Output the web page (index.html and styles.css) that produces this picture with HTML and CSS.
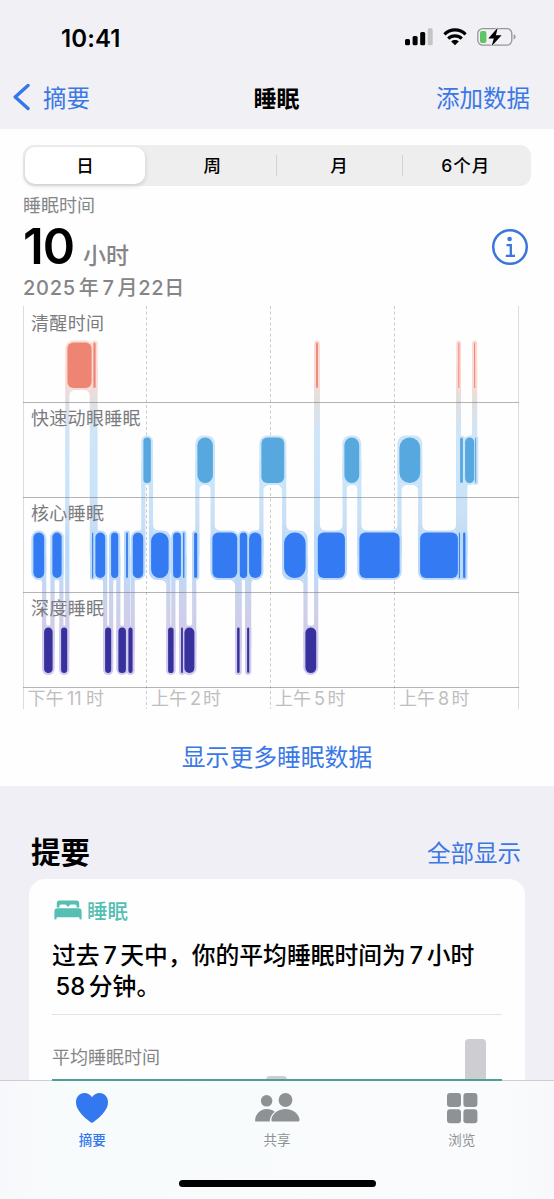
FILE: index.html
```html
<!DOCTYPE html>
<html lang="zh-CN">
<head>
  <meta charset="UTF-8" />
  <meta name="viewport" content="width=device-width, initial-scale=1.0"/>
  <title>睡眠</title>
  <link rel="stylesheet" href="styles.css">
</head>
<body>

  <header>
    <div class="status-bar">
      <span class="clock">10:41</span>
      <div class="status-icons">
        <svg width="28" height="18" viewBox="0 0 28 18">
          <rect x="0" y="11" width="5" height="6.3" rx="1.5"/>
          <rect x="7.6" y="8" width="5" height="9.3" rx="1.5"/>
          <rect x="15.2" y="4" width="5" height="13.3" rx="1.5"/>
          <rect x="22.7" y="0.3" width="5" height="17" rx="1.5" fill="#c4c4c8"/>
        </svg>
        <svg width="24" height="18" viewBox="0 0 24 18">
          <g fill="none" stroke="#000" stroke-width="3.1">
            <path d="M1.4 6.4C7.2 0.4 16.8 0.4 22.6 6.4"/>
            <path d="M5.2 10.6C9 6.9 15 6.9 18.8 10.6"/>
          </g>
          <path d="M12 17.2L8.2 13.4C10.3 11.6 13.7 11.6 15.8 13.4Z"/>
        </svg>
        <svg width="40" height="20" viewBox="0 0 40 20">
          <rect x="0.8" y="1.6" width="34" height="16.6" rx="5" fill="none" stroke="#97979b" stroke-width="1.3"/>
          <path d="M36.6 7.3C39.2 8 39.2 11.8 36.6 12.5Z" fill="#97979b"/>
          <rect x="3" y="4" width="6.4" height="12" rx="2" fill="#5fc466"/>
          <path d="M20.8 0.6L11.3 11.4H16.8L14.6 19.2L24.6 8.2H18.9Z" stroke="#f1f0f5" stroke-width="1.6" paint-order="stroke"/>
        </svg>
      </div>
    </div>
    <div class="nav-bar">
      <a class="back" href="#">
        <svg width="18" height="28" viewBox="0 0 18 28"><path d="M15 2.5L2.2 14L15 25.5" fill="none" stroke="#3478e8" stroke-width="3.4" stroke-linecap="round" stroke-linejoin="round"/></svg>
        摘要
      </a>
      <h1>睡眠</h1>
      <a class="add" href="#">添加数据</a>
    </div>
  </header>

  <main>
    <section class="sleep">
      <div class="tabs">
        <button class="active">日</button>
        <button>周</button>
        <button>月</button>
        <button>6个月</button>
      </div>

      <div class="summary">
        <div>
          <p class="label">睡眠时间</p>
          <p class="total"><b>10</b><span>小时</span></p>
          <p class="date">2025<i></i>年<i></i>7<i></i>月22日</p>
        </div>
        <svg class="info" width="38" height="38" viewBox="0 0 38 38" fill="none" stroke="#3a76dc">
          <circle cx="19" cy="19" r="16.8" stroke-width="2.5"/>
          <circle cx="18.6" cy="11" r="2.3" fill="#3a76dc" stroke="none"/>
          <path d="M15.5 17.1H19.8V27.2M14.8 27.8H24" stroke-width="2.3"/>
        </svg>
      </div>

      <svg class="chart" width="554" height="410" viewBox="0 303 554 410">
        <defs>
          <linearGradient id="halo" gradientUnits="userSpaceOnUse" x1="0" y1="340" x2="0" y2="675">
            <stop offset="0" stop-color="#fcdcd5"/>
            <stop offset="0.13" stop-color="#fadad5"/>
            <stop offset="0.18" stop-color="#e2dee0"/>
            <stop offset="0.27" stop-color="#cfe5f7"/>
            <stop offset="0.44" stop-color="#c9e4fa"/>
            <stop offset="0.54" stop-color="#cadff4"/>
            <stop offset="0.6" stop-color="#b9dafb"/>
            <stop offset="0.7" stop-color="#bcdafa"/>
            <stop offset="0.76" stop-color="#cbd3ec"/>
            <stop offset="0.86" stop-color="#d0cce9"/>
            <stop offset="1" stop-color="#cfcaf0"/>
          </linearGradient>
        </defs>
        <g class="dashes">
          <path d="M146.5 306V709M270.5 306V709M394.5 306V709"/>
        </g>
        <g id="links" fill="url(#halo)"></g>
        <g id="bars"></g>
        <path class="side" d="M23.5 306V709M518.5 306V709"/>
        <path class="rows" d="M23 402.5H519M23 497.5H519M23 592.5H519M23 687.5H519"/>
        <g class="stage-names">
          <text x="31" y="330" textLength="73">清醒时间</text>
          <text x="31" y="425" textLength="109.5">快速动眼睡眠</text>
          <text x="31" y="520" textLength="73">核心睡眠</text>
          <text x="31" y="614.5" textLength="73">深度睡眠</text>
        </g>
        <g class="hours">
          <text x="27.5" y="705">下午</text><text x="67" y="705">11</text><text x="86" y="705">时</text>
          <text x="151" y="705">上午</text><text x="190" y="705">2</text><text x="203" y="705">时</text>
          <text x="275" y="705">上午</text><text x="314" y="705">5</text><text x="327.5" y="705">时</text>
          <text x="399" y="705">上午</text><text x="438" y="705">8</text><text x="451.5" y="705">时</text>
        </g>
      </svg>

      <a class="more" href="#">显示更多睡眠数据</a>
    </section>

    <section class="highlights">
      <div class="heading">
        <h2>提要</h2>
        <a href="#">全部显示</a>
      </div>
      <article class="card">
        <div class="card-title">
          <svg width="28" height="20" viewBox="0 0 28 20" fill="#55bfb3">
            <path d="M2.8 7.4V3.2Q2.8 0.4 5.6 0.4H22.4Q25.2 0.4 25.2 3.2V7.4H22.6V6Q22.6 4.4 21 4.4H16.8Q15.2 4.4 15.2 6Q14 7 12.8 6Q12.8 4.4 11.200 4.4H7Q5.400 4.4 5.400 6V7.400Z"/>
            <path d="M3.500 8.300H24.500Q27.600 8.300 27.600 11.500V18.500Q27.600 19.400 26.500 19.400Q25.400 19.400 25.400 18.500V17.200H2.600V18.500Q2.600 19.400 1.500 19.400Q0.400 19.400 0.400 18.500V11.500Q0.400 8.300 3.500 8.300Z"/>
          </svg>
          睡眠
        </div>
        <p class="text">过去<i></i>7<i></i>天中，你的平均睡眠时间为<i></i>7<i></i>小时<br><i></i>58<i></i>分钟。</p>
        <p class="average">平均睡眠时间</p>
        <div class="week">
          <span class="day mid"></span>
          <span class="day last"></span>
        </div>
      </article>
    </section>
  </main>

  <footer>
    <nav>
      <a class="current" href="#">
        <svg width="34" height="32" viewBox="0 0 34 32"><path fill="#3478f0" d="M17 31C14 29 1 20 1 10.2C1 5 4.6 1 9.3 1C12.7 1 15.5 2.8 17 5.2C18.5 2.8 21.3 1 24.7 1C29.4 1 33 5 33 10.2C33 20 20 29 17 31Z"/></svg>
        摘要
      </a>
      <a href="#">
        <svg width="46" height="32" viewBox="0 0 46 32" fill="#8f9294">
          <circle cx="12.6" cy="8.8" r="5.8"/>
          <path d="M1.2 29.5C0.5 23 6 17 12.8 17C15.8 17 18.6 18 20.7 19.7C17.800 22 15.800 25.500 15.700 29.500Z"/>
          <circle cx="31.5" cy="8" r="6.9"/>
          <path d="M18.5 29.5C17.2 29.5 17.2 27.5 17.7 26C19.4 20.8 25 17 31.5 17C38 17 43.6 20.8 45.2 26C45.7 27.5 45.7 29.5 44.3 29.5Z"/>
        </svg>
        共享
      </a>
      <a href="#">
        <svg width="32" height="32" viewBox="0 0 32 32" fill="#8f9294">
          <rect x="1" y="1" width="14" height="14" rx="3"/>
          <rect x="17.4" y="1" width="14" height="14" rx="3"/>
          <rect x="1" y="17.3" width="14" height="14" rx="3"/>
          <rect x="17.4" y="17.3" width="14" height="14" rx="3"/>
        </svg>
        浏览
      </a>
    </nav>
    <div class="home-indicator"></div>
  </footer>

  <script src="chart.js"></script>
</body>
</html>
```
FILE: styles.css
```css
* {
  box-sizing: border-box;
}

body {
  margin: 0;
  height: 1199px;
  overflow: hidden;
  display: flex;
  flex-direction: column;
  font-family: Inter, "Noto Sans CJK SC", sans-serif;
  background-color: #f0eff5;
  color: #000;
}

a {
  color: #3a78e6;
  text-decoration: none;
}

p, h1, h2 {
  margin: 0;
}

svg {
  display: block;
}

/* small gap between digits and characters */
i {
  display: inline-block;
  width: 0.15em;
}

header {
  height: 129px;
  flex: none;
  background-color: #f1f0f5;
}

.status-bar {
  height: 68px;
  padding: 8px 37px 0 61px;
  display: flex;
  justify-content: space-between;
  align-items: center;
}

.clock {
  font-size: 24px;
  font-weight: 600;
  letter-spacing: 0.1px;
}

.status-icons {
  display: flex;
  align-items: center;
  gap: 10px;
  padding-bottom: 2px;
}

.nav-bar {
  height: 61px;
  padding: 0 24px 3px 13px;
  display: grid;
  grid-template-columns: 1fr auto 1fr;
  align-items: center;
  font-size: 23.5px;
}

.back {
  display: flex;
  align-items: center;
  gap: 12px;
}

.nav-bar h1 {
  font-size: 23px;
  font-weight: 700;
  padding-left: 10px;
}

.add {
  text-align: right;
}

main {
  height: 951px;
  flex: none;
  overflow: hidden;
}

.sleep {
  height: 657px;
  padding-top: 16px;
  background-color: #fefefe;
  display: flex;
  flex-direction: column;
}

.tabs {
  display: flex;
  height: 41px;
  flex: none;
  margin: 0 23px;
  padding: 2px;
  border-radius: 11px;
  background-color: #eeeeef;
}

.tabs button {
  flex: 1;
  position: relative;
  padding: 0 0 2px;
  border: none;
  border-radius: 10px;
  background: none;
  font-family: inherit;
  font-size: 17.5px;
  font-weight: 500;
  color: #000;
}

.tabs button:last-child {
  letter-spacing: 0.9px;
}

.tabs .active {
  flex: none;
  width: 120px;
  margin-right: 4px;
  background-color: #fff;
  box-shadow: 0 2px 5px rgba(0,0,0,0.14);
}

.tabs button:nth-child(n+3)::before {
  content: "";
  position: absolute;
  left: 0;
  top: 8px;
  width: 1px;
  height: 21px;
  background-color: #d2d2d4;
}

.summary {
  height: 117px;
  flex: none;
  padding: 7px 25px 0 23px;
  display: flex;
  justify-content: space-between;
  color: #858588;
}

.summary .label {
  font-size: 18px;
  line-height: 26px;
}

.total {
  display: flex;
  align-items: baseline;
  gap: 9px;
  height: 56px;
  line-height: 56px;
}

.total b {
  font-size: 49px;
  font-weight: 600;
  color: #000;
  letter-spacing: -1px;
}

.total span {
  font-size: 23px;
  font-weight: 500;
}

.date {
  font-size: 20px;
  line-height: 26px;
  font-weight: 500;
  letter-spacing: 0.7px;
}

.info {
  margin-top: 35px;
}

.chart {
  flex: none;
}

.dashes {
  fill: none;
  stroke: #cdcdcf;
  stroke-width: 1;
  stroke-dasharray: 3 2.5;
}

.side {
  stroke: #dcdcde;
}

.rows {
  stroke: #77777a;
  stroke-opacity: 0.55;
}

.stage-names {
  font-size: 18px;
  fill: #7b7b7e;
}

.hours {
  font-size: 18px;
  fill: #bebec1;
}

.awake { fill: #ee8472; }
.rem { fill: #57a8df; }
.core { fill: #337af3; }
.deep { fill: #38319d; }

.more {
  margin-top: 17px;
  text-align: center;
  font-size: 23.8px;
  line-height: 56px;
}

.heading {
  height: 93px;
  padding: 38px 33px 0 31px;
  display: flex;
  justify-content: space-between;
  align-items: center;
}

.heading h2 {
  font-size: 29.5px;
  line-height: 40px;
}

.heading a {
  font-size: 23.5px;
  padding-top: 1px;
}

.card {
  height: 300px;
  margin: 0 29px;
  padding: 15px 23px 0;
  border-radius: 16px;
  background-color: #fefefe;
}

.card-title {
  display: flex;
  align-items: center;
  gap: 5px;
  height: 31px;
  padding-left: 2px;
  font-size: 20.5px;
  font-weight: 500;
  color: #55bfb3;
}

.card .text {
  height: 90px;
  padding-top: 15px;
  border-bottom: 1px solid #e3e3e6;
  font-size: 23.8px;
  font-weight: 500;
  line-height: 31px;
  white-space: nowrap;
}

.average {
  padding-top: 30px;
  font-size: 18px;
  line-height: 26px;
  color: #858588;
}

.week {
  display: flex;
  gap: 178px;
  height: 60px;
  margin-top: -32px;
  padding-left: 214px;
}

.day {
  width: 21px;
  border-radius: 4px 4px 0 0;
  background-color: #cecdd1;
}

.day.mid {
  margin-top: 37px;
}

footer {
  position: relative;
  flex: 1;
  border-top: 1px solid #cfcfd2;
  background: linear-gradient(90deg, #f7f8fb 0, #f8fbfc 60px, #f9fbfc 500px, #f8f8fb 100%);
}

/* average line of the card, seen on the edge of the tab bar */
footer::before {
  content: "";
  position: absolute;
  left: 52px;
  top: -2px;
  width: 450px;
  height: 2px;
  background-color: #4da096;
}

nav {
  display: flex;
  height: 94px;
}

nav a {
  flex: 1;
  display: flex;
  flex-direction: column;
  align-items: center;
  gap: 6px;
  padding-top: 11px;
  font-size: 13.5px;
  line-height: 20px;
  color: #8f9294;
}

nav .current {
  font-weight: 500;
  color: #3478f0;
}

.home-indicator {
  width: 197px;
  height: 7px;
  margin: 5px auto 0;
  border-radius: 4px;
  background-color: #000;
}
```
FILE: chart.js
```js
const rows = { awake: 342.5, rem: 437.5, core: 532.5, deep: 627.5 };
const barHeight = 45.5;

// stage, start, end
const segments = [
  ["core", 33.3, 44.3], ["deep", 44, 52.7], ["core", 52.3, 61.7], ["deep", 61, 67.3],
  ["awake", 67.3, 91.7], ["core", 92, 93.3], ["awake", 93.3, 95.7], ["core", 95.3, 105.3],
  ["deep", 105, 111.3], ["core", 111, 118.3], ["deep", 118.3, 126], ["core", 126, 128],
  ["deep", 128.3, 132.7], ["core", 132.7, 143.3], ["rem", 143.3, 151], ["core", 151, 168.7],
  ["deep", 168, 173.7], ["core", 173, 181], ["deep", 181, 183], ["core", 183, 184.5],
  ["deep", 184.3, 194.5], ["core", 194, 197.3], ["rem", 197.3, 213], ["core", 212.3, 237.3],
  ["deep", 237, 239.7], ["core", 239.7, 247.3], ["deep", 247, 249.3], ["core", 249, 261.5],
  ["rem", 261.3, 284.3], ["core", 284, 305.7], ["deep", 305.3, 316.3], ["awake", 316, 318],
  ["core", 317.7, 345], ["rem", 344.3, 359.3], ["core", 359.3, 399.7], ["rem", 399.3, 420.3],
  ["core", 420, 458], ["awake", 458.2, 459], ["core", 458.8, 460], ["rem", 460, 463],
  ["core", 463, 465.5], ["rem", 465, 474.3], ["awake", 474, 475.2], ["rem", 475, 476.3]
];

function radius(w) {
  return w < 22.2 ? w / 2 : 6;
}

function rect(x, y, w, h, r) {
  return `<rect x="${x}" y="${y}" width="${w}" height="${h}" rx="${r}"/>`;
}

let links = "";
let bars = "";

segments.forEach(([stage, x0, x1], i) => {
  const w = x1 - x0;
  const y = rows[stage];
  const r = radius(w);
  links += rect(x0 - 2, y - 2, w + 4, barHeight + 4, Math.min(r + 2, 8));
  bars += `<g class="${stage}">${rect(x0 + 0.1, y, Math.max(w - 0.2, 1), barHeight, r)}</g>`;

  const next = segments[i + 1];
  if (!next) return;

  // vertical strip between the two stages
  const x = (x1 + next[1]) / 2;
  const from = y + barHeight / 2;
  const to = rows[next[0]] + barHeight / 2;
  links += rect(x - 2.1, Math.min(from, to), 4.2, Math.abs(to - from), 0);

  // rounded inner corners where the strip meets each bar
  const dir = to > from ? 1 : -1;
  const edge = barHeight / 2 + 1.8;
  const a = Math.max(0, Math.min(7, (w - 4) / 2));
  const b = Math.max(0, Math.min(7, (next[2] - next[1] - 4) / 2));
  const ya = from + dir * edge;
  const yb = to - dir * edge;
  links += `<path d="M${x - 1.9} ${ya}v${dir * a}q0 ${-dir * a} ${-a} ${-dir * a}z"/>`;
  links += `<path d="M${x + 1.9} ${yb}v${-dir * b}q0 ${dir * b} ${b} ${dir * b}z"/>`;
});

document.getElementById("links").innerHTML = links;
document.getElementById("bars").innerHTML = bars;
```
